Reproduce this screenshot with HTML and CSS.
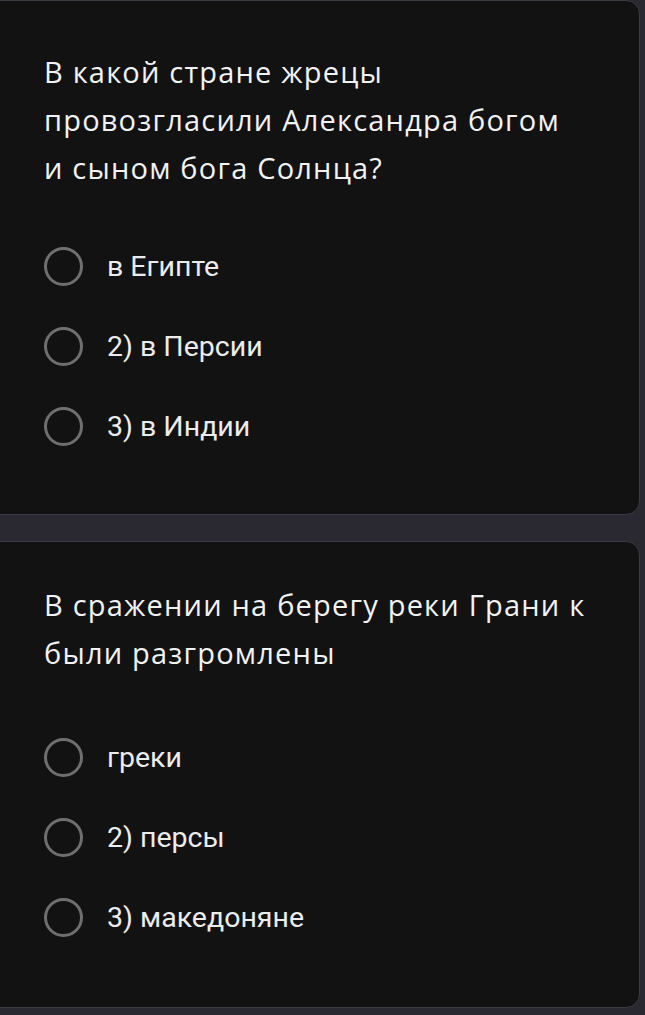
FILE: index.html
```html
<!DOCTYPE html>
<html lang="ru">
<head>
<meta charset="utf-8">
<link rel="stylesheet" href="styles.css">
</head>
<body>
<div class="page">
  <section class="card card-first">
    <h2 class="question question-first">В какой стране жрецы провозгласили Александра богом и сыном бога Солнца?</h2>
    <ul class="options">
      <li class="option"><span class="radio"></span><span class="label">в Египте</span></li>
      <li class="option"><span class="radio"></span><span class="label">2) в Персии</span></li>
      <li class="option"><span class="radio"></span><span class="label">3) в Индии</span></li>
    </ul>
  </section>
  <section class="card card-second">
    <h2 class="question">В сражении на берегу реки Грани к были разгромлены</h2>
    <ul class="options options-second">
      <li class="option"><span class="radio"></span><span class="label">греки</span></li>
      <li class="option"><span class="radio"></span><span class="label">2) персы</span></li>
      <li class="option"><span class="radio"></span><span class="label">3) македоняне</span></li>
    </ul>
  </section>
</div>
</body>
</html>
```
FILE: styles.css
```css
html, body {
  margin: 0;
  padding: 0;
  background: #2a2830;
  height: 100%;
  overflow: hidden;
}
.page {
  display: flex;
  flex-direction: column;
  gap: 26px;
  margin-left: -12px;
  width: 652px;
}
.card {
  background: #121212;
  border: 1px solid #3c3b42;
  border-radius: 14px;
  padding: 0 0 0 55px;
  box-sizing: border-box;
}
.card-first {
  height: 515px;
  padding-top: 47px;
}
.card-second {
  height: 467px;
  padding-top: 39px;
}
.question {
  margin: 0;
  font-family: "Open Sans", sans-serif;
  font-weight: 400;
  font-size: 29px;
  letter-spacing: 1.2px;
  line-height: 48px;
  color: #f2f2f2;
  width: 560px;
}
.question-first {
  width: 535px;
}
.options {
  list-style: none;
  margin: 54px 0 0 0;
  padding: 0;
  display: flex;
  flex-direction: column;
  gap: 40px;
}
.options-second {
  margin-top: 60px;
}
.option {
  display: flex;
  align-items: center;
  height: 40px;
}
.radio {
  width: 33px;
  height: 33px;
  border: 3px solid #6f6f70;
  border-radius: 50%;
  flex: none;
}
.label {
  margin-left: 24px;
  font-family: Roboto, sans-serif;
  font-size: 28.5px;
  color: #ececec;
}
```
